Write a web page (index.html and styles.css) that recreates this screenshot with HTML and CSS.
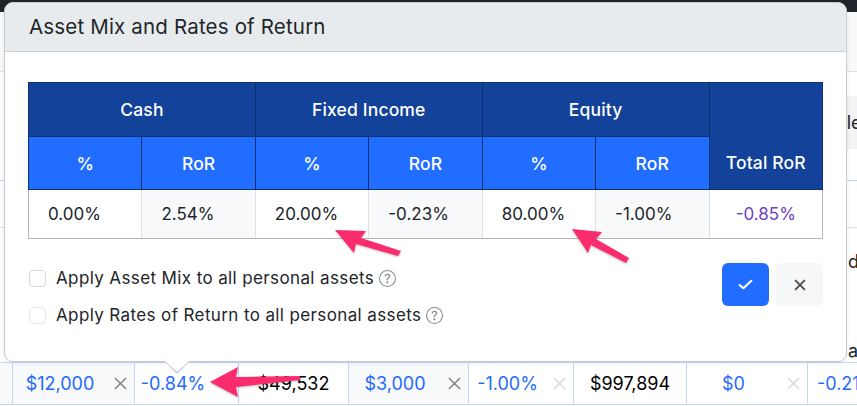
FILE: index.html
```html
<!DOCTYPE html>
<html lang="en">
<head>
    <meta charset="UTF-8">
    <meta name="viewport" content="width=device-width, initial-scale=1.0">
    <title>Asset Mix and Rates of Return</title>
    <link rel="stylesheet" href="styles.css">
</head>
<body>
    <div class="page">
        <div class="navbar"></div>
        <div class="subbar"></div>
        <div class="toolbar">
            <div class="tool-box">Schedule</div>
        </div>
        <div class="bg-row"></div>
        <div class="bg-row bg-row-mid"><span class="bg-cell">dividends</span></div>
        <div class="bg-row bg-row-low"><span class="bg-cell">annual</span></div>

        <div class="ledger-row">
            <div class="ledger-cell edge"></div>
            <div class="ledger-cell shaded w122">
                <span class="value amount">$12,000</span>
                <span class="clear"><svg viewBox="0 0 14 14" width="13" height="13"><path d="M1 1L13 13M13 1L1 13"/></svg></span>
            </div>
            <div class="ledger-cell w104">
                <span class="value amount">-0.84%</span>
                <span class="clear"></span>
            </div>
            <div class="ledger-cell w110">
                <span class="value">$49,532</span>
            </div>
            <div class="ledger-cell shaded w120">
                <span class="value amount">$3,000</span>
                <span class="clear"><svg viewBox="0 0 14 14" width="13" height="13"><path d="M1 1L13 13M13 1L1 13"/></svg></span>
            </div>
            <div class="ledger-cell w105">
                <span class="value amount">-1.00%</span>
                <span class="clear faint"><svg viewBox="0 0 14 14" width="13" height="13"><path d="M1 1L13 13M13 1L1 13"/></svg></span>
            </div>
            <div class="ledger-cell w113">
                <span class="value">$997,894</span>
            </div>
            <div class="ledger-cell w121">
                <span class="value amount">$0</span>
                <span class="clear faint"><svg viewBox="0 0 14 14" width="13" height="13"><path d="M1 1L13 13M13 1L1 13"/></svg></span>
            </div>
            <div class="ledger-cell last">
                <span class="amount">-0.21%</span>
            </div>
        </div>
    </div>

    <div class="popover">
        <div class="popover-header">Asset Mix and Rates of Return</div>
        <div class="popover-body">
            <table class="mix-table">
                <thead>
                    <tr class="group-row">
                        <th colspan="2">Cash</th>
                        <th colspan="2">Fixed Income</th>
                        <th colspan="2">Equity</th>
                        <th rowspan="2" class="total-head">Total RoR</th>
                    </tr>
                    <tr class="sub-row">
                        <th>%</th>
                        <th>RoR</th>
                        <th>%</th>
                        <th>RoR</th>
                        <th>%</th>
                        <th>RoR</th>
                    </tr>
                </thead>
                <tbody>
                    <tr>
                        <td>0.00%</td>
                        <td class="ror">2.54%</td>
                        <td>20.00%</td>
                        <td class="ror">-0.23%</td>
                        <td>80.00%</td>
                        <td class="ror">-1.00%</td>
                        <td class="total">-0.85%</td>
                    </tr>
                </tbody>
            </table>

            <div class="popover-footer">
                <div class="options">
                    <label class="option">
                        <span class="checkbox"></span>
                        Apply Asset Mix to all personal assets
                        <svg class="help" viewBox="0 0 16 16" width="17" height="17" fill="currentColor">
                            <path d="M8 15A7 7 0 1 1 8 1a7 7 0 0 1 0 14m0 1A8 8 0 1 0 8 0a8 8 0 0 0 0 16"/>
                            <path d="M5.255 5.786a.237.237 0 0 0 .241.247h.825c.138 0 .248-.113.266-.25.09-.656.54-1.134 1.342-1.134.686 0 1.314.343 1.314 1.168 0 .635-.374.927-.965 1.371-.673.489-1.206 1.06-1.168 1.987l.003.217a.25.25 0 0 0 .25.246h.811a.25.25 0 0 0 .25-.25v-.105c0-.718.273-.927 1.010-1.486.609-.463 1.244-.977 1.244-2.056 0-1.511-1.276-2.241-2.673-2.241-1.267 0-2.655.59-2.75 2.286m1.557 5.763c0 .533.425.927 1.01.927.609 0 1.028-.394 1.028-.927 0-.552-.42-.94-1.029-.94-.584 0-1.009.388-1.009.94"/>
                        </svg>
                    </label>
                    <label class="option">
                        <span class="checkbox light"></span>
                        Apply Rates of Return to all personal assets
                        <svg class="help" viewBox="0 0 16 16" width="17" height="17" fill="currentColor">
                            <path d="M8 15A7 7 0 1 1 8 1a7 7 0 0 1 0 14m0 1A8 8 0 1 0 8 0a8 8 0 0 0 0 16"/>
                            <path d="M5.255 5.786a.237.237 0 0 0 .241.247h.825c.138 0 .248-.113.266-.25.09-.656.54-1.134 1.342-1.134.686 0 1.314.343 1.314 1.168 0 .635-.374.927-.965 1.371-.673.489-1.206 1.06-1.168 1.987l.003.217a.25.25 0 0 0 .25.246h.811a.25.25 0 0 0 .25-.25v-.105c0-.718.273-.927 1.010-1.486.609-.463 1.244-.977 1.244-2.056 0-1.511-1.276-2.241-2.673-2.241-1.267 0-2.655.59-2.75 2.286m1.557 5.763c0 .533.425.927 1.01.927.609 0 1.028-.394 1.028-.927 0-.552-.42-.94-1.029-.94-.584 0-1.009.388-1.009.94"/>
                        </svg>
                    </label>
                </div>
                <div class="actions">
                    <button class="btn btn-save" type="button">
                        <svg viewBox="0 0 16 16" width="17" height="17" fill="none" stroke="#fff" stroke-width="2" stroke-linecap="round" stroke-linejoin="round">
                            <polyline points="2.5,8.5 6,11.5 13.5,4.5"/>
                        </svg>
                    </button>
                    <button class="btn btn-cancel" type="button">
                        <svg viewBox="0 0 16 16" width="14" height="14" fill="none" stroke="#495057" stroke-width="2.2" stroke-linecap="round">
                            <line x1="3" y1="3" x2="13" y2="13"/>
                            <line x1="13" y1="3" x2="3" y2="13"/>
                        </svg>
                    </button>
                </div>
            </div>
        </div>
    </div>

    <!-- callout arrows drawn over the page -->
    <svg class="callouts" viewBox="0 0 857 406" width="857" height="406">
        <polygon points="335,230 366,231 361,238 401,251 398,256 356,244 354,253"/>
        <polygon points="572,229 602,232 596,239 629,258 626,263 591,245 588,253"/>
        <polygon points="210,382 238,367 236,377 300,376 300,380 236,387 238,397"/>
    </svg>
</body>
</html>
```

FILE: styles.css
```css
body {
    margin: 0;
    font-family: Inter, "Helvetica Neue", Arial, sans-serif;
    color: #212529;
    background-color: #fff;
    width: 857px;
    height: 406px;
    overflow: hidden;
    position: relative;
}
.navbar {
    height: 12px;
    background-color: #212529;
}
.subbar {
    height: 59px;
    background-color: #f8f9fa;
    border-bottom: 1px solid #dee2e6;
}
.toolbar {
    height: 108px;
    border-bottom: 1px solid #b9d0f5;
    display: flex;
    align-items: flex-start;
}
.tool-box {
    margin-top: 24px;
    margin-left: 800px;
    height: 53px;
    flex: 1;
    background-color: #f1f3f5;
    border-radius: 6px 0 0 6px;
    font-size: 18px;
    line-height: 53px;
    white-space: nowrap;
    overflow: hidden;
    text-indent: -18px;
}
.bg-row {
    height: 46px;
    border-bottom: 1px solid #dee2e6;
    display: flex;
    align-items: center;
    justify-content: flex-end;
}
.bg-row-mid {
    height: 67px;
    border-bottom: none;
}
.bg-row-low {
    height: 66px;
    border-bottom: none;
    align-items: flex-end;
    padding-bottom: 1px;
}
.bg-cell {
    width: 9px;
    overflow: hidden;
    white-space: nowrap;
    font-size: 18px;
}
.ledger-row {
    display: flex;
    height: 41px;
    border-top: 1px solid #c5d9f7;
    border-bottom: 1px solid #c5d9f7;
}
.ledger-cell {
    box-sizing: border-box;
    flex-shrink: 0;
    display: flex;
    align-items: center;
    font-size: 18px;
    white-space: nowrap;
    border-left: 1px solid #c5d9f7;
}
.ledger-cell.edge {
    width: 12px;
    border-left: none;
    background-color: #f8f9fb;
}
.w122 { width: 122px; }
.w104 { width: 104px; }
.w110 { width: 110px; }
.w120 { width: 120px; }
.w105 { width: 105px; }
.w113 { width: 113px; }
.w121 { width: 121px; }
.ledger-cell.shaded {
    background-color: #f8f9fa;
}
.ledger-cell.last {
    flex: 1;
    padding-left: 9px;
}
.value {
    flex: 1;
    text-align: center;
    color: #000;
}
.amount {
    color: #1f6bff;
}
.clear {
    width: 27px;
    display: flex;
    justify-content: center;
    stroke: #7a8086;
    stroke-width: 1.5;
}
.clear.faint {
    stroke: #d6dade;
}

.popover {
    position: absolute;
    left: 4px;
    top: 2px;
    width: 843px;
    height: 360px;
    box-sizing: border-box;
    background-color: #fff;
    border: 1px solid #c8ccd0;
    border-radius: 9px;
    box-shadow: 0 1px 4px rgba(0,0,0,0.08);
}
/* little pointer under the popover */
.popover::before,
.popover::after {
    content: "";
    position: absolute;
    left: 160px;
    border-style: solid;
    border-color: transparent;
}
.popover::before {
    bottom: -13px;
    border-width: 12px 12px 0 12px;
    border-top-color: #c8ccd0;
}
.popover::after {
    bottom: -11px;
    border-width: 11px 12px 0 12px;
    border-top-color: #fff;
}
.popover-header {
    height: 48px;
    padding-left: 24px;
    background-color: #e8ebee;
    border-bottom: 1px solid #cdd0d3;
    border-radius: 8px 8px 0 0;
    font-size: 20.5px;
    letter-spacing: 0.17px;
    line-height: 48px;
    font-weight: 400;
    color: #212529;
}
.popover-body {
    padding: 30px 23px 0 23px;
}
.mix-table {
    width: 795px;
    border-collapse: collapse;
    table-layout: fixed;
    font-size: 17px;
}
.mix-table th {
    color: #fff;
    font-weight: 500;
    font-size: 17.5px;
    letter-spacing: 0.15px;
    text-align: center;
    border: 1px solid #0b2f70;
    padding: 0;
}
.group-row th {
    height: 53px;
    background-color: #124299;
}
.sub-row th {
    height: 52px;
    background-color: #216dff;
}
.mix-table th.total-head {
    background-color: #124299;
    padding-top: 52px;
}
.mix-table td {
    height: 48px;
    padding: 0 0 0 19px;
    border: 1px solid #dee2e6;
    border-bottom-color: #b4b8bc;
    background-color: #fff;
}
.mix-table td:first-child {
    border-left-color: #b4b8bc;
}
.mix-table td:last-child {
    border-right-color: #b4b8bc;
}
.mix-table td.ror {
    background-color: #f8f9fa;
}
.mix-table td.total {
    text-align: center;
    padding: 0;
    color: #6f42c1;
}
.popover-footer {
    display: flex;
    justify-content: space-between;
    align-items: flex-start;
    margin-top: 24px;
}
.options {
    display: flex;
    flex-direction: column;
    gap: 13px;
    padding-top: 3px;
}
.option {
    display: flex;
    align-items: center;
    height: 24px;
    font-size: 17px;
    letter-spacing: 0.38px;
}
.checkbox {
    width: 15px;
    height: 15px;
    margin: 0 10px 0 1px;
    border: 1px solid #d6d9dc;
    border-radius: 4px;
    background-color: #fff;
}
.checkbox.light {
    border-color: #e6e8ea;
}
.help {
    color: #868e96;
    margin-left: 5px;
}
.actions {
    display: flex;
    gap: 7px;
}
.btn {
    width: 47px;
    height: 43px;
    border: none;
    border-radius: 6px;
    display: flex;
    align-items: center;
    justify-content: center;
    padding: 0;
}
.btn-save {
    background-color: #216dff;
}
.btn-cancel {
    background-color: #f6f7f8;
}
.callouts {
    position: absolute;
    left: 0;
    top: 0;
    pointer-events: none;
    fill: #fb2c6d;
    filter: drop-shadow(0 1px 1px rgba(0,0,0,0.25));
}
```
